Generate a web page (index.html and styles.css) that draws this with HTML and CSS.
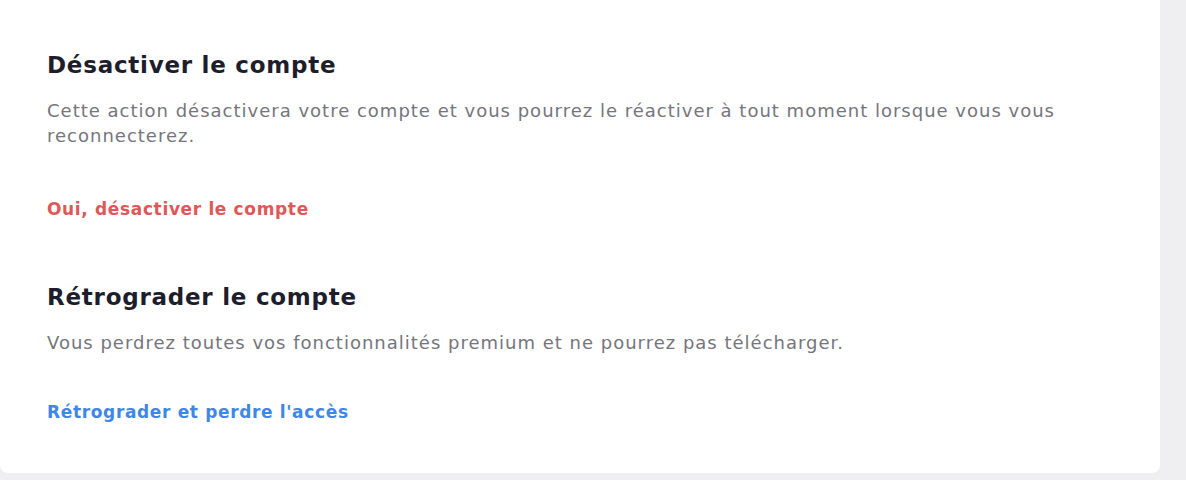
FILE: index.html
```html
<!DOCTYPE html>
<html lang="fr">
<head>
    <meta charset="utf-8">
    <link rel="stylesheet" href="styles.css">
</head>
<body>
    <div class="card">
        <!-- Deactivate account -->
        <section class="block">
            <h2>Désactiver le compte</h2>
            <p>Cette action désactivera votre compte et vous pourrez le réactiver à tout moment lorsque vous vous reconnecterez.</p>
            <a href="#" class="action danger">Oui, désactiver le compte</a>
        </section>
        <!-- Downgrade account -->
        <section class="block">
            <h2>Rétrograder le compte</h2>
            <p class="short">Vous perdrez toutes vos fonctionnalités premium et ne pourrez pas télécharger.</p>
            <a href="#" class="action info">Rétrograder et perdre l'accès</a>
        </section>
    </div>
</body>
</html>
```

FILE: styles.css
```css
body {
    margin: 0;
    height: 480px;
    background: #efeff1;
    font-family: 'DejaVu Sans', sans-serif;
    overflow: hidden;
}
.card {
    width: 1160px;
    box-sizing: border-box;
    background: #fff;
    border-radius: 0 0 8px 8px;
    padding: 50px 100px 50px 47px;
    display: flex;
    flex-direction: column;
    gap: 62px;
}
.block h2 {
    margin: 0 0 18px;
    font-size: 23px;
    line-height: 30px;
    font-weight: 700;
    letter-spacing: 0.75px;
    color: #1d1d2b;
}
.block p {
    margin: 0 0 50px;
    font-size: 18px;
    line-height: 25px;
    letter-spacing: 1px;
    color: #75757d;
}
.block p.short {
    margin-bottom: 46px;
}
.action {
    display: inline-block;
    font-size: 17px;
    line-height: 22px;
    font-weight: 700;
    letter-spacing: 0.65px;
    text-decoration: none;
}
.danger {
    color: #e05757;
}
.info {
    color: #3e87e6;
}
```
